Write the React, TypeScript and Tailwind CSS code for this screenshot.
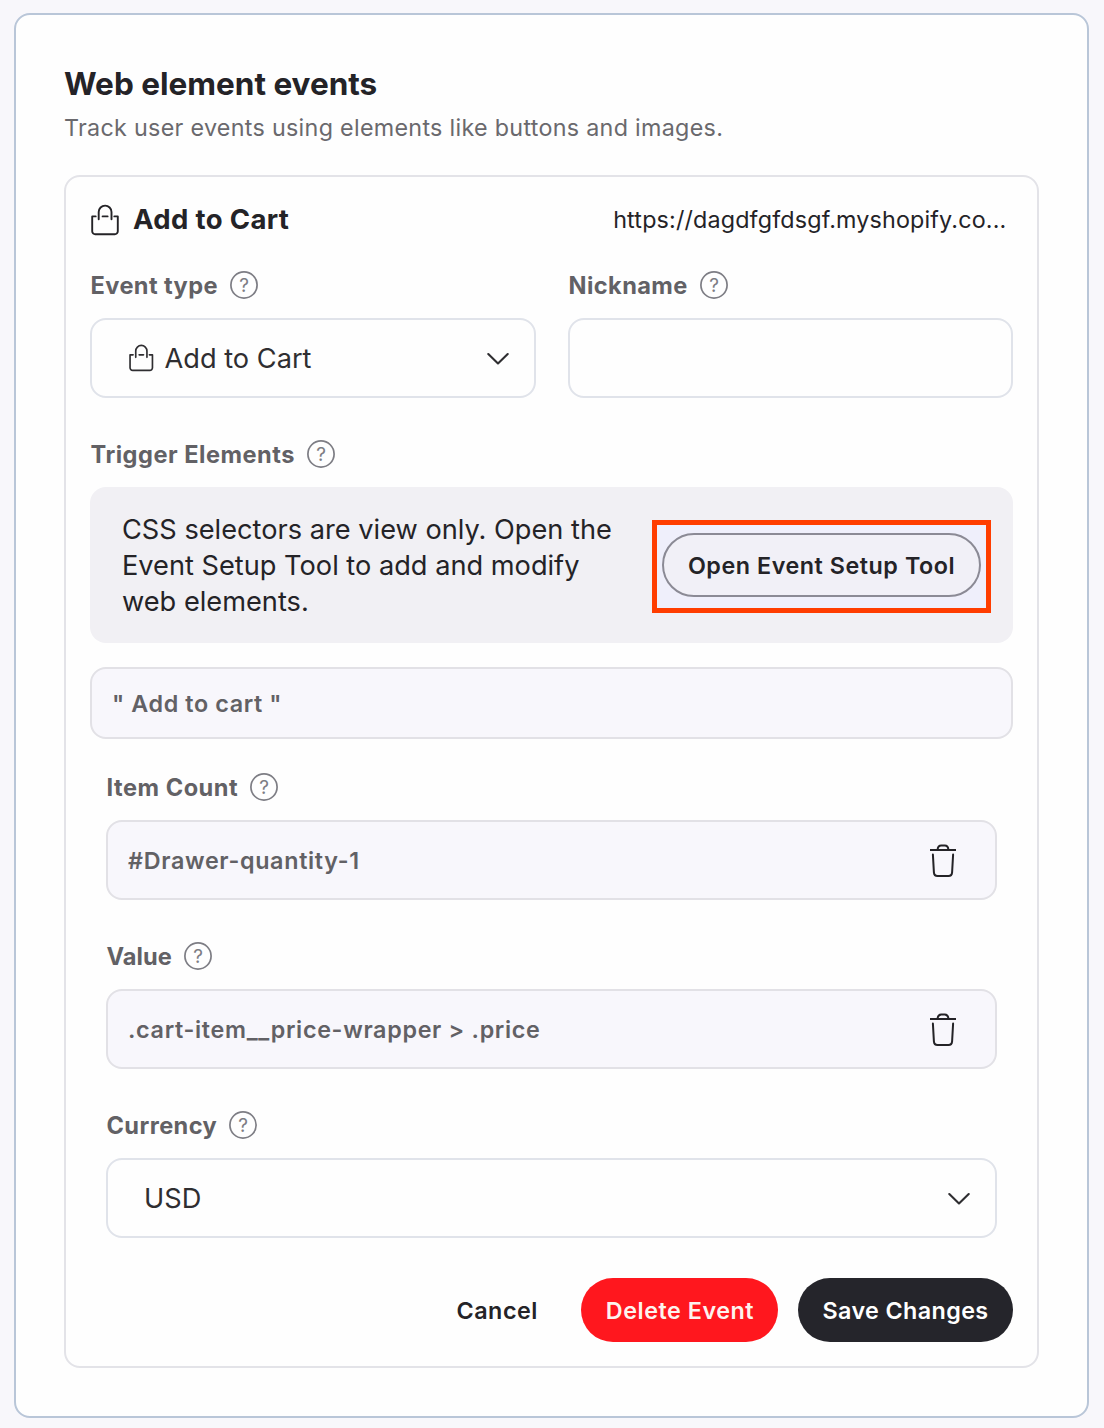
import type { ReactNode } from 'react'
import clsx from 'clsx'

function BagIcon({ className }: { className?: string }) {
  return (
    <svg
      viewBox="0 0 28 32"
      fill="none"
      stroke="currentColor"
      strokeWidth="1.9"
      strokeLinecap="round"
      strokeLinejoin="round"
      className={className}
    >
      <path d="M4.7 12.4H1.2V27.2a3 3 0 0 0 3 3H23.8a3 3 0 0 0 3-3V12.4H23.3" />
      <path d="M7.7 15.2V8a6.4 6.4 0 0 1 12.8 0v7.2" />
      <path d="M11.6 12.4h5" />
    </svg>
  )
}

function ChevronIcon() {
  return (
    <svg
      viewBox="0 0 22 14"
      fill="none"
      stroke="currentColor"
      strokeWidth="2.1"
      className="mb-px h-[14px] w-[22px]"
      strokeLinecap="round"
      strokeLinejoin="round"
    >
      <path d="M1.3 2 11 11.5 20.7 2" />
    </svg>
  )
}

function TrashIcon() {
  return (
    <svg
      viewBox="0 0 26 34"
      fill="none"
      stroke="currentColor"
      strokeWidth="2"
      className="mb-px h-[34px] w-[26px]"
    >
      <path d="M0 6h26" />
      <path d="M7.6 5.6C7.9 2.4 9 1.4 11.2 1.4h3.6c2.2 0 3.3 1 3.6 4.2" />
      <path
        d="M2.9 10.6 3.9 28.4c.2 2.6 1.4 3.6 3.6 3.6h11c2.2 0 3.4-1 3.6-3.6L23.1 10.6"
        strokeLinecap="round"
      />
    </svg>
  )
}

function HelpIcon() {
  return (
    <svg viewBox="0 0 28 28" className="h-7 w-7 shrink-0 text-[#7d7d84]">
      <circle cx="14" cy="14" r="13.1" fill="none" stroke="currentColor" strokeWidth="1.7" />
      <text x="14" y="20.8" textAnchor="middle" fontSize="19" fill="currentColor">
        ?
      </text>
    </svg>
  )
}

function FieldLabel({ children, className }: { children: string; className?: string }) {
  return (
    <div className="flex h-7 items-center gap-3">
      <span
        className={clsx(
          'pt-0.5 pl-[0.5px] text-[23.6px] leading-7 font-bold text-[#626165]',
          className ?? 'tracking-[0.42px]'
        )}
      >
        {children}
      </span>
      <HelpIcon />
    </div>
  )
}

function SelectBox({ children }: { children: ReactNode }) {
  return (
    <button className="flex h-20 w-full items-center justify-between rounded-2xl border-2 border-[#e0e3ea] bg-[#fefefe] pt-0.5 pr-[25px] pl-9 text-[27.2px] text-[#2f2e31]">
      <span className="flex items-center">{children}</span>
      <ChevronIcon />
    </button>
  )
}

function SelectorBox({ value }: { value: string }) {
  return (
    <div className="flex h-20 items-center justify-between rounded-2xl border-2 border-[#e2e1e6] bg-[#f8f7fc] pt-0.5 pr-[39px] pl-5">
      <span className="text-[23.3px] font-semibold tracking-[0.69px] text-[#626165]">{value}</span>
      <button className="text-[#242327]">
        <TrashIcon />
      </button>
    </div>
  )
}

const selectors = [
  { label: 'Item Count', value: '#Drawer-quantity-1', labelClass: 'tracking-[0.52px]' },
  { label: 'Value', value: '.cart-item__price-wrapper > .price', labelClass: 'tracking-[0.05px]' },
]

export default function App() {
  return (
    <div className="h-[1428px] w-[1104px] bg-[#f8f7fb] pt-[13px] pl-[14px] font-['Inter',sans-serif] text-[#242327]">
      <section className="h-[1405px] w-[1075px] rounded-2xl border-2 border-[#b9c6d8] bg-[#fefefe] px-12 pt-[49px]">
        <h1 className="text-[31.5px] leading-10 font-bold tracking-[0px]">Web element events</h1>
        <p className="mt-2 text-[23.3px] leading-8 tracking-[0.3px] text-[#6a696d]">
          Track user events using elements like buttons and images.
        </p>

        <div className="mt-[31px] h-[1193px] rounded-2xl border-2 border-[#e3e3e8] px-6 pt-6">
          {/* Event header */}
          <div className="flex h-9 items-center justify-between pt-0.5">
            <div className="flex items-center gap-[14px]">
              <BagIcon className="ml-px h-8 w-7" />
              <h2 className="pb-0.5 text-[27.5px] leading-9 font-bold tracking-[0.35px]">
                Add to Cart
              </h2>
            </div>
            <span className="mr-[6.5px] text-[23.3px] tracking-[0.17px]">
              https://dagdfgfdsgf.myshopify.co...
            </span>
          </div>

          <div className="mt-[34px] grid grid-cols-[446px_445px] gap-8">
            <div>
              <FieldLabel>Event type</FieldLabel>
              <div className="mt-[19px]">
                <SelectBox>
                  <BagIcon className="mr-[11px] mb-px ml-px h-7 w-[24.5px]" />
                  <span className="tracking-[0px]">Add to Cart</span>
                </SelectBox>
              </div>
            </div>
            <div>
              <FieldLabel>Nickname</FieldLabel>
              <input className="mt-[19px] h-20 w-full rounded-2xl border-2 border-[#e0e3ea] bg-[#fefefe] px-5 text-[27.2px] outline-none" />
            </div>
          </div>

          {/* Trigger elements */}
          <div className="mt-[42px]">
            <FieldLabel className="tracking-[0.5px]">Trigger Elements</FieldLabel>
          </div>
          <div className="mt-[19px] flex h-[156px] items-center justify-between rounded-2xl bg-[#f1f0f4] px-8">
            <p className="pt-0.5 text-[27.2px] leading-9">
              CSS selectors are view only. Open the
              <br />
              Event Setup Tool to add and modify
              <br />
              web elements.
            </p>
            <div className="relative">
              {/* Highlight frame around the button */}
              <div className="absolute -top-[13px] -right-[10px] -bottom-4 -left-[10px] border-[5px] border-[#ff3d00] bg-[#efeffb]" />
              <button className="relative h-16 w-[319px] rounded-full border-2 border-[#8b8a95] bg-[#f1f0f7] pt-0.5 text-[23.3px] font-semibold tracking-[0.55px] whitespace-nowrap">
                Open Event Setup Tool
              </button>
            </div>
          </div>

          <div className="mt-6 flex h-[72px] items-center rounded-2xl border-2 border-[#e2e1e6] bg-[#f8f7fc] px-5 pt-0.5 text-[23.3px] font-semibold tracking-[0.62px] text-[#626165]">
            " Add to cart "
          </div>

          <div className="px-4">
            {selectors.map((item, i) => (
              <div key={item.label} className={i === 0 ? 'mt-[34px]' : 'mt-[42px]'}>
                <FieldLabel className={item.labelClass}>{item.label}</FieldLabel>
                <div className="mt-[19px]">
                  <SelectorBox value={item.value} />
                </div>
              </div>
            ))}

            <div className="mt-[42px]">
              <FieldLabel>Currency</FieldLabel>
              <div className="mt-[19px]">
                <SelectBox>USD</SelectBox>
              </div>
            </div>
          </div>

          {/* Actions */}
          <div className="mt-10 flex justify-end text-[23.3px] font-semibold tracking-[0.55px]">
            <button className="mr-[43px] h-16 pt-0.5">Cancel</button>
            <button className="mr-5 h-16 w-[197px] rounded-full bg-[#ff171e] pt-0.5 pl-px text-[#fdf3ee]">
              Delete Event
            </button>
            <button className="h-16 w-[215px] rounded-full bg-[#25252b] pt-0.5 tracking-[0.4px] text-white">
              Save Changes
            </button>
          </div>
        </div>
      </section>
    </div>
  )
}
